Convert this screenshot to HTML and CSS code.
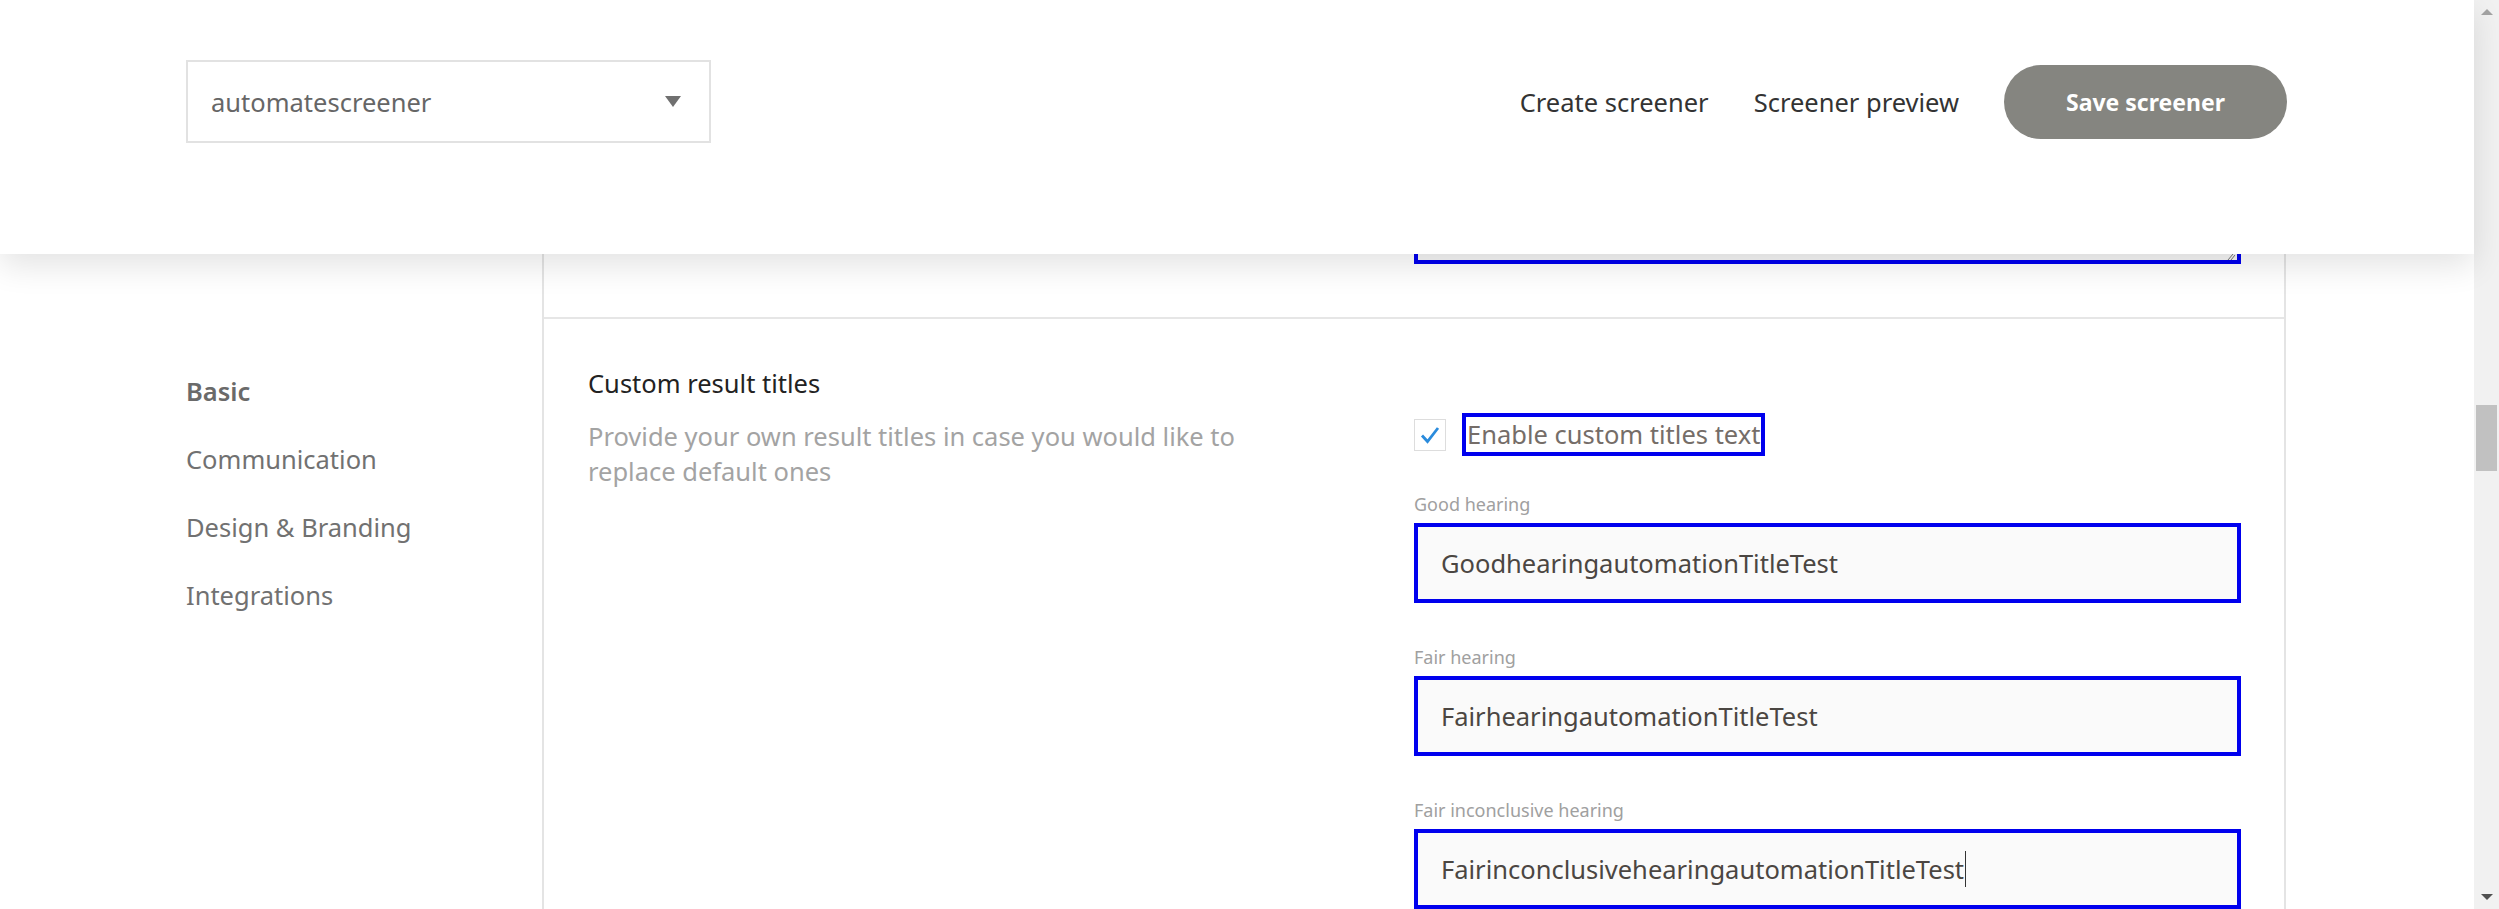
FILE: index.html
```html
<!DOCTYPE html>
<html lang="en">
<head>
<meta charset="utf-8">
<title>Screener settings</title>
<link rel="stylesheet" href="styles.css">
</head>
<body>
<div class="page">
  <header class="topbar">
    <div class="select">
      <span class="select-text">automatescreener</span>
      <span class="caret"></span>
    </div>
    <nav class="toplinks">
      <a class="toplink">Create screener</a>
      <a class="toplink">Screener preview</a>
      <button class="save">Save screener</button>
    </nav>
  </header>
  <main class="main">
    <aside class="sidenav">
      <div class="navitem active">Basic</div>
      <div class="navitem">Communication</div>
      <div class="navitem">Design &amp; Branding</div>
      <div class="navitem">Integrations</div>
    </aside>
    <section class="card">
      <div class="section section-prev">
        <div class="col"></div>
        <div class="col">
          <div class="textarea-tail">
            <svg class="grip" width="8" height="6" viewBox="0 0 8 6"><path d="M6 0 L1 6 M8 1 L4 6" stroke="#777" stroke-width="1"/></svg>
          </div>
        </div>
      </div>
      <div class="section">
        <div class="col">
          <div class="sec-title">Custom result titles</div>
          <p class="sec-desc">Provide your own result titles in case you would like to replace default ones</p>
        </div>
        <div class="col col-fields">
          <div class="checkrow">
            <span class="checkbox">
              <svg width="24" height="24" viewBox="0 0 24 24"><path d="M4 12.5 L9.5 18.5 L20 5" fill="none" stroke="#2a8bdc" stroke-width="2.8"/></svg>
            </span>
            <span class="checklabel">Enable custom titles text</span>
          </div>
          <div class="field">
            <div class="field-label">Good hearing</div>
            <div class="field-input">GoodhearingautomationTitleTest</div>
          </div>
          <div class="field">
            <div class="field-label">Fair hearing</div>
            <div class="field-input">FairhearingautomationTitleTest</div>
          </div>
          <div class="field">
            <div class="field-label">Fair inconclusive hearing</div>
            <div class="field-input">FairinconclusivehearingautomationTitleTest<span class="cursor"></span></div>
          </div>
        </div>
      </div>
    </section>
  </main>
</div>
<div class="scrollbar">
  <span class="arrow up"></span>
  <div class="track"><div class="thumb"></div></div>
  <span class="arrow down"></span>
</div>
</body>
</html>
```

FILE: styles.css
```css
html, body {
  margin: 0;
  padding: 0;
  height: 909px;
  overflow: hidden;
  background: #fff;
}
body {
  display: flex;
  font-family: "Noto Sans", "Open Sans", sans-serif;
}
.page {
  flex: 1;
  display: flex;
  flex-direction: column;
  min-width: 0;
}
.topbar {
  position: relative;
  z-index: 2;
  height: 255px;
  box-sizing: border-box;
  padding: 60px 187px 0 186px;
  display: flex;
  justify-content: space-between;
  align-items: flex-start;
  background: #fff;
  box-shadow: 0 12px 30px rgba(0, 0, 0, 0.11);
}
.select {
  width: 525px;
  height: 83px;
  box-sizing: border-box;
  border: 2px solid #e2e2e2;
  display: flex;
  align-items: center;
  justify-content: space-between;
  padding: 0 28px 0 23px;
}
.select-text {
  font-size: 25.5px;
  color: #666;
}
.caret {
  width: 0;
  height: 0;
  border-left: 8px solid transparent;
  border-right: 8px solid transparent;
  border-top: 11px solid #707070;
}
.toplinks {
  display: flex;
  align-items: center;
  gap: 45px;
  height: 83px;
}
.toplink {
  font-size: 25.5px;
  color: #333;
  text-decoration: none;
}
.save {
  width: 283px;
  height: 74px;
  border: none;
  border-radius: 37px;
  background: #858580;
  color: #fff;
  font-family: "Noto Sans", "Open Sans", sans-serif;
  font-weight: 700;
  font-size: 23px;
  padding: 0;
}
.main {
  flex: 1;
  display: flex;
}
.sidenav {
  width: 542px;
  box-sizing: border-box;
  padding: 119px 0 0 186px;
  display: flex;
  flex-direction: column;
  gap: 32px;
}
.navitem {
  font-size: 25.5px;
  line-height: 36px;
  color: #717171;
}
.navitem.active {
  font-weight: 600;
  color: #6a6a6a;
}
.card {
  width: 1744px;
  box-sizing: border-box;
  border-left: 2px solid #e4e4e4;
  border-right: 2px solid #e4e4e4;
}
.section {
  display: grid;
  grid-template-columns: 826px 827px;
  padding: 46px 0 0 44px;
}
.section-prev {
  padding-top: 0;
  padding-bottom: 53px;
  border-bottom: 2px solid #e6e6e6;
}
.textarea-tail {
  height: 10px;
  box-sizing: border-box;
  border: 4px solid #0000ee;
  border-top: none;
  background: #f6f6f6;
  display: flex;
  justify-content: flex-end;
  align-items: flex-end;
}
.grip {
  margin: 0 2px 0 0;
}
.sec-title {
  font-size: 25.5px;
  line-height: 36px;
  color: #222;
}
.sec-desc {
  margin: 18px 0 0;
  max-width: 700px;
  font-size: 25.5px;
  line-height: 35px;
  color: #a3a3a3;
}
.col-fields {
  padding-top: 48px;
}
.checkrow {
  display: flex;
  align-items: center;
  gap: 16px;
  height: 43px;
}
.checkbox {
  width: 32px;
  height: 32px;
  box-sizing: border-box;
  border: 1px solid #ddd;
  background: #fff;
  display: flex;
  align-items: center;
  justify-content: center;
}
.checklabel {
  border: 4px solid #0000ee;
  height: 43px;
  box-sizing: border-box;
  padding: 0 1px 0 1px;
  font-size: 25.5px;
  line-height: 35px;
  color: #756d68;
}
.field {
  margin-top: 35px;
}
.field + .field {
  margin-top: 41px;
}
.field-label {
  font-size: 18px;
  line-height: 26px;
  color: #a0a0a0;
  margin-bottom: 6px;
}
.field-input {
  height: 80px;
  box-sizing: border-box;
  border: 4px solid #0000ee;
  background: #fafafa;
  padding: 0 23px;
  display: flex;
  align-items: center;
  font-size: 25.5px;
  color: #4b4642;
}
.cursor {
  display: inline-block;
  width: 1px;
  height: 36px;
  background: #333;
  margin-left: 1px;
}
.scrollbar {
  width: 25px;
  height: 909px;
  background: #f1f1f1;
  display: flex;
  flex-direction: column;
  align-items: center;
}
.track {
  flex: 1;
  width: 100%;
  padding-top: 381px;
  box-sizing: border-box;
  display: flex;
  justify-content: center;
}
.thumb {
  width: 21px;
  height: 66px;
  background: #c1c1c1;
}
.arrow {
  width: 0;
  height: 0;
  border-left: 6px solid transparent;
  border-right: 6px solid transparent;
  margin: 9px 0;
}
.arrow.up {
  border-bottom: 6px solid #a3a3a3;
}
.arrow.down {
  border-top: 6px solid #505050;
}
```
